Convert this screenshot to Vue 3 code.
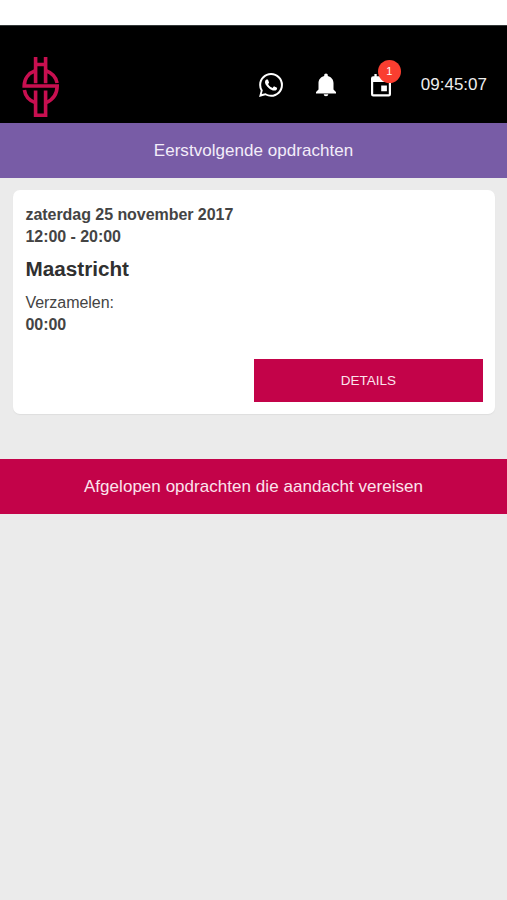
<script setup>
const assignment = {
  date: 'zaterdag 25 november 2017',
  hours: '12:00 - 20:00',
  city: 'Maastricht',
  gatherLabel: 'Verzamelen:',
  gatherTime: '00:00',
}
const notifications = 1
</script>

<template>
  <div class="app">
    <header class="topbar">
      <svg class="logo" viewBox="0 0 38 62" fill="none" stroke="#c80f50" stroke-width="3.6">
        <path d="M13.600 0V26.200M23.600 0V26.200M13.600 7.500H23.600" />
        <path d="M13.600 33.400V58.200H23.600V33.400" />
        <path d="M13.200 13.800C7 16 2.300 21.500 2.200 29H35.200C35 37.500 30.500 43 24 45.600" />
        <path d="M24 13.800C30 16 34 20.500 35.100 26" />
        <path d="M2.400 33C3.300 39 7 43.500 13.200 45.600" />
      </svg>
      <nav class="actions">
        <svg class="whatsapp" viewBox="0 0 24 24" fill="#fff">
          <path d="M.057 24l1.687-6.163a11.867 11.867 0 0 1-1.587-5.946C.16 5.335 5.495 0 12.050 0a11.817 11.817 0 0 1 8.413 3.488 11.824 11.824 0 0 1 3.480 8.414c-.003 6.557-5.338 11.892-11.893 11.892a11.900 11.900 0 0 1-5.688-1.448L.057 24zm6.597-3.807c1.676.995 3.276 1.591 5.392 1.592 5.448 0 9.886-4.434 9.889-9.885.002-5.462-4.415-9.890-9.881-9.892-5.452 0-9.887 4.434-9.889 9.884a9.830 9.830 0 0 0 1.599 5.391l-.999 3.648 3.889-.738zm11.387-5.464c-.074-.124-.272-.198-.570-.347-.297-.149-1.758-.868-2.031-.967-.272-.099-.470-.149-.669.149-.198.297-.768.967-.941 1.165-.173.198-.347.223-.644.074-.297-.149-1.255-.462-2.390-1.475-.883-.788-1.480-1.761-1.653-2.059-.173-.297-.018-.458.130-.606.134-.133.297-.347.446-.521.151-.172.200-.296.300-.495.099-.198.050-.372-.025-.521-.075-.148-.669-1.611-.916-2.206-.242-.579-.487-.501-.669-.510l-.570-.010c-.198 0-.520.074-.792.372s-1.040 1.016-1.040 2.479 1.065 2.876 1.213 3.074c.149.198 2.095 3.200 5.076 4.487.709.306 1.263.489 1.694.626.712.226 1.360.194 1.872.118.571-.085 1.758-.719 2.006-1.413.248-.695.248-1.290.173-1.414z" />
        </svg>
        <svg class="bell" viewBox="0 0 20 24" fill="#fff">
          <path d="M10 .6C8.900 .6 8.200 1.400 8.200 2.400v.7C4.600 4 2.500 6.800 2.500 10.300V16.600L0 19V20.400H20V19L17.500 16.600V10.300C17.500 6.800 15.400 4 11.800 3.100V2.400C11.800 1.400 11.100 .6 10 .6zM7.700 21.200a2.300 2.100 0 0 0 4.600 0z" />
        </svg>
        <div class="calendar">
          <svg viewBox="0 0 20 23" fill="#fff">
            <path fill-rule="evenodd" d="M3.400 0H5.700V2.200H14.300V0H16.600V2.200H17.800A2.200 2.200 0 0 1 20 4.400V20.200A2.200 2.200 0 0 1 17.800 22.400H2.200A2.200 2.200 0 0 1 0 20.200V4.400A2.200 2.200 0 0 1 2.200 2.200H3.400zM2.200 8V20.200H17.800V8zM10.200 11.600H15.900V17.300H10.200z" />
          </svg>
          <span class="badge">{{ notifications }}</span>
        </div>
        <time class="clock">09:45:07</time>
      </nav>
    </header>
    <h2 class="section upcoming"><span>Eerstvolgende opdrachten</span></h2>
    <main class="content">
      <article class="card">
        <p class="strong">{{ assignment.date }}</p>
        <p class="strong">{{ assignment.hours }}</p>
        <h3 class="city">{{ assignment.city }}</h3>
        <p>{{ assignment.gatherLabel }}</p>
        <p class="strong">{{ assignment.gatherTime }}</p>
        <button class="details">DETAILS</button>
      </article>
    </main>
    <h2 class="section attention"><span>Afgelopen opdrachten die aandacht vereisen</span></h2>
  </div>
</template>

<style>
body {
  margin: 0;
  background: #ebebeb;
}
</style>

<style scoped>
.app {
  box-sizing: border-box;
  min-height: 900px;
  padding-top: 25px;
  background: linear-gradient(#fff 25px, #ebebeb 25px);
  font-family: "Liberation Sans", Arial, sans-serif;
  color: #444;
}
.topbar {
  box-sizing: border-box;
  height: 98px;
  padding: 32px 20px 0 22px;
  display: flex;
  align-items: flex-start;
  justify-content: space-between;
  background: #000;
  border-top: 1px solid #333838;
}
.logo {
  width: 38px;
  height: 62px;
  margin-top: -1px;
}
.actions {
  display: flex;
  align-items: center;
  height: 54px;
}
.whatsapp {
  width: 24px;
  height: 24px;
  margin-right: 33px;
}
.bell {
  width: 20px;
  height: 24px;
  margin-right: 35px;
}
.calendar {
  position: relative;
  width: 20px;
  height: 23px;
  margin-right: 30px;
}
.calendar svg {
  display: block;
  width: 20px;
  height: 23px;
}
.badge {
  position: absolute;
  left: 7px;
  top: -14px;
  width: 23px;
  height: 23px;
  border-radius: 50%;
  background: #fa3e30;
  color: #fff;
  font-size: 11px;
  line-height: 23px;
  text-align: center;
}
.clock {
  color: #eee;
  font-size: 17px;
  line-height: 20px;
}
.section {
  margin: 0;
  height: 55px;
  display: flex;
  align-items: center;
  justify-content: center;
  font-size: 17px;
  font-weight: 400;
  letter-spacing: 0.04px;
}
.upcoming {
  background: #785ca6;
  color: #f3edf9;
}
.attention {
  background: #c30349;
  color: #fbe3ed;
}
.content {
  padding: 12px 12px 45px 13px;
}
.card {
  box-sizing: border-box;
  height: 224px;
  padding: 14px 12px 12px 12.5px;
  display: flex;
  flex-direction: column;
  background: #fff;
  border-radius: 7px;
  box-shadow: 0 1px 1px #dedede;
}
.card p {
  margin: 0;
  font-size: 16px;
  line-height: 22px;
  letter-spacing: -0.05px;
}
.card .strong {
  font-weight: 700;
}
.city {
  margin: 8px 0 11px;
  font-size: 20.7px;
  line-height: 25px;
  color: #303030;
}
.details {
  width: 229px;
  height: 43px;
  margin: auto 0 0;
  padding: 0 0 1px;
  align-self: flex-end;
  border: 0;
  background: #c30349;
  color: #fbe3ed;
  font: 13.5px "Liberation Sans", Arial, sans-serif;
}
</style>
